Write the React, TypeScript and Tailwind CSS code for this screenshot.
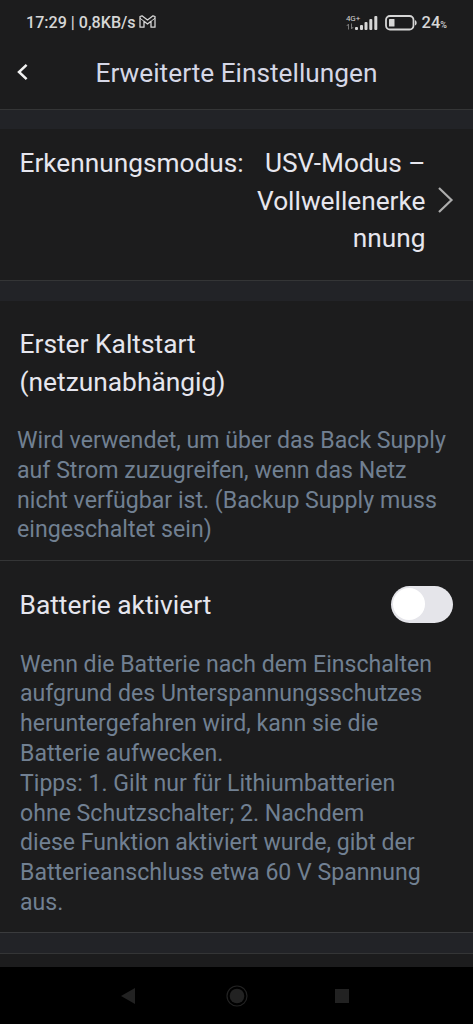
import { useState } from 'react';

function StatusBar() {
  return (
    <div className="flex h-[45px] items-center pl-[26px] pr-[26px] text-[#d6d6d6]">
      <span className="text-[16.1px] font-medium leading-[20px]">17:29 | 0,8KB/s</span>
      <svg className="ml-[3.5px] mt-[-2px] h-[13px] w-[17px]" viewBox="0 0 17 13" fill="none" stroke="currentColor">
        <path
          d="M1 1.5 3 .8 8.5 5 14 .8l2 .7v10.7h-4V6.3L8.5 9 5 6.3v5.9H1z"
          strokeWidth="1.3"
          strokeLinejoin="round"
        />
        <path d="M1 3.2 5 6.3M16 3.2l-4 3.1" strokeWidth="1" />
      </svg>
      <div className="ml-auto flex items-center">
        <div className="flex flex-col">
          <span className="text-[8px] leading-[8px] tracking-[-0.1px]">4G+</span>
          <svg className="h-[7px] w-[8px] text-[#777]" viewBox="0 0 8 7" fill="none" stroke="currentColor">
            <path d="M2.5 6.5V1L.8 3M5.5.5V6l1.7-2" strokeWidth="1" />
          </svg>
        </div>
        <svg className="ml-[-5px] mt-[1px] h-[16px] w-[23px]" viewBox="0 0 23 16" fill="currentColor">
          <rect x="0" y="12" width="3" height="3" rx="1" />
          <rect x="5" y="10" width="3" height="5" rx="1" />
          <rect x="9.5" y="7" width="3" height="8" rx="1" />
          <rect x="14.3" y="4" width="3" height="11" rx="1" />
          <rect x="19.3" y="1" width="3" height="14" rx="1" />
        </svg>
        <svg className="ml-[6.5px] h-[16px] w-[33px]" viewBox="0 0 33 16" fill="none">
          <rect x="1" y="1" width="27.5" height="13.5" rx="4" stroke="currentColor" strokeWidth="1.8" />
          <rect x="4" y="4" width="5.5" height="7.5" rx="0.6" fill="currentColor" />
          <path d="M30 5.2c2.2.6 2.2 4.6 0 5.2z" fill="currentColor" />
        </svg>
        <span className="ml-[4px] mt-[2px] text-[16.5px] font-medium leading-[20px]">
          24<span className="text-[9px]">%</span>
        </span>
      </div>
    </div>
  );
}

function Header() {
  return (
    <header className="relative flex h-[65px] items-center justify-center border-b border-[#343536] pb-[8px]">
      <svg
        className="absolute left-[16px] top-[18px] h-[18px] w-[13px] text-[#f2f2f2]"
        viewBox="0 0 13 18"
        fill="none"
        stroke="currentColor"
      >
        <path d="M10.6 1.8 3 9l7.6 7.2" strokeWidth="2.5" />
      </svg>
      <h1 className="text-[26.25px] leading-[32px] text-[#d5d7e6]">Erweiterte Einstellungen</h1>
    </header>
  );
}

type ToggleProps = {
  checked: boolean;
  onChange: (checked: boolean) => void;
};

function Toggle({ checked, onChange }: ToggleProps) {
  return (
    <button
      type="button"
      role="switch"
      aria-checked={checked}
      onClick={() => onChange(!checked)}
      className={`mt-[-2px] flex h-[37px] w-[62px] items-center rounded-full bg-[#e5e5ea] px-[2px] ${checked ? 'justify-end' : ''}`}
    >
      <span className="h-[32px] w-[32px] rounded-full bg-white" />
    </button>
  );
}

function NavBar() {
  return (
    <nav className="flex h-[57px] items-center bg-black pl-[121px] text-[#222]">
      <svg className="h-[22px] w-[14px]" viewBox="0 0 14 22" fill="currentColor">
        <path d="M14 3v16L0 11z" />
      </svg>
      <svg className="ml-[91px] h-[22px] w-[22px]" viewBox="0 0 22 22" fill="currentColor">
        <circle cx="11" cy="11" r="7.3" />
        <circle cx="11" cy="11" r="10" fill="none" stroke="currentColor" strokeWidth="1.2" />
      </svg>
      <svg className="ml-[87px] h-[14px] w-[14px]" viewBox="0 0 14 14" fill="currentColor">
        <rect width="14" height="14" />
      </svg>
    </nav>
  );
}

export default function App() {
  const [batteryEnabled, setBatteryEnabled] = useState(false);

  return (
    <div className="flex h-[1024px] w-[473px] flex-col overflow-hidden bg-[#1c1c1d] font-['Roboto',sans-serif]">
      <StatusBar />
      <Header />
      <div className="h-[19px] bg-[#222327]" />

      <section className="flex h-[152px] border-b border-[#343536] pl-[19.5px] pt-[16px] text-[26.25px] leading-[37.6px] text-[#e6e6ee]">
        <span className="w-[226px] whitespace-nowrap">Erkennungsmodus:</span>
        <span className="w-[180px] text-right">
          USV-Modus –<br />
          Vollwellenerke
          <br />
          nnung
        </span>
        <svg
          className="ml-[11.5px] mt-[41px] h-[28px] w-[18px] text-[#adadad]"
          viewBox="0 0 18 28"
          fill="none"
          stroke="currentColor"
        >
          <path d="m2 2 12.5 12L2 26" strokeWidth="2.2" />
        </svg>
      </section>
      <div className="h-[20px] bg-[#222327]" />

      <section className="h-[260px] border-b border-[#343536] pt-[24px]">
        <h2 className="pl-[19.5px] text-[26.35px] leading-[38px] text-[#e6e6ee]">
          Erster Kaltstart
          <br />
          (netzunabhängig)
        </h2>
        <p className="pl-[17px] pt-[25px] text-[23.15px] leading-[29.8px] text-[#718092]">
          Wird verwendet, um über das Back Supply
          <br />
          auf Strom zuzugreifen, wenn das Netz
          <br />
          nicht verfügbar ist. (Backup Supply muss
          <br />
          eingeschaltet sein)
        </p>
      </section>

      <section className="h-[372px] border-b border-[#3a3b3d] pt-[24px]">
        <div className="flex h-[40px] items-center justify-between pl-[19.5px] pr-[20px]">
          <h2 className="text-[26.35px] leading-[38px] text-[#e6e6ee]">Batterie aktiviert</h2>
          <Toggle checked={batteryEnabled} onChange={setBatteryEnabled} />
        </div>
        <p className="pl-[20px] pt-[24.6px] text-[23.1px] leading-[29.8px] text-[#718092]">
          Wenn die Batterie nach dem Einschalten
          <br />
          aufgrund des Unterspannungsschutzes
          <br />
          heruntergefahren wird, kann sie die
          <br />
          Batterie aufwecken.
          <br />
          Tipps: 1. Gilt nur für Lithiumbatterien
          <br />
          ohne Schutzschalter; 2. Nachdem
          <br />
          diese Funktion aktiviert wurde, gibt der
          <br />
          Batterieanschluss etwa 60 V Spannung
          <br />
          aus.
        </p>
      </section>
      <div className="h-[21px] border-b border-[#343536] bg-[#222327]" />
      <div className="h-[13px]" />
      <NavBar />
    </div>
  );
}
